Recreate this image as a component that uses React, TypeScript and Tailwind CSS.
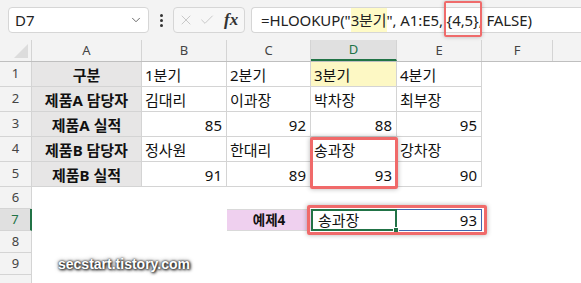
import { ChevronDown, X, Check } from 'lucide-react';

const KR = "font-['Segoe_UI','Noto_Sans','Noto_Sans_CJK_KR',sans-serif]";

const colW = ['w-[110px]', 'w-[85px]', 'w-[84px]', 'w-[86px]', 'w-[85px]', 'w-[71px]', 'w-[60px]'];
const colNames = ['A', 'B', 'C', 'D', 'E', 'F', ''];

type Cell = string | number;

const data: Cell[][] = [
  ['구분', '1분기', '2분기', '3분기', '4분기'],
  ['제품A 담당자', '김대리', '이과장', '박차장', '최부장'],
  ['제품A 실적', 85, 92, 88, 95],
  ['제품B 담당자', '정사원', '한대리', '송과장', '강차장'],
  ['제품B 실적', 91, 89, 93, 90],
];

function TopBar() {
  return (
    <div className="h-[40px] bg-[#f3f3f3] flex items-start pt-[7px] pl-[8px] gap-[6px]">
      <div className="w-[141px] h-[26px] bg-white border border-[#d6d6d6] rounded-[4px] flex items-center justify-between pl-[6px] pr-[5px]">
        <span className="text-[15px] text-[#222]">D7</span>
        <ChevronDown className="w-[14px] h-[14px] text-[#555]" strokeWidth={1.5} />
      </div>
      <div className="w-[12px] h-[26px] flex flex-col items-center justify-center gap-[2px]">
        <span className="w-[3px] h-[3px] bg-[#333] rounded-full" />
        <span className="w-[3px] h-[3px] bg-[#333] rounded-full" />
        <span className="w-[3px] h-[3px] bg-[#333] rounded-full" />
      </div>
      <div className="w-[72px] h-[26px] bg-[#f7f7f7] border border-[#d6d6d6] rounded-[4px] flex items-center pl-[4px] gap-[5px]">
        <X className="w-[16px] h-[16px] text-[#bdbdbd]" strokeWidth={1.2} />
        <Check className="w-[16px] h-[16px] text-[#bdbdbd]" strokeWidth={1.2} />
        <span className="ml-[4px] font-['Liberation_Serif',serif] italic text-[17px] text-[#333] font-semibold">fx</span>
      </div>
      <div className="flex-1 h-[26px] bg-white border border-r-0 border-[#d6d6d6] rounded-l-[4px] flex items-stretch pl-[9px] text-[15px] text-[#222] tracking-[-0.1px] whitespace-pre">
        <span className="self-center">=HLOOKUP(&quot;</span>
        <span className="bg-[#fffbc6] flex items-center">3분기</span>
        <span className="self-center">&quot;, A1:E5, </span>
        <span className="self-center relative">
          {'{4,5}'}
          <span className="absolute left-[-3px] right-[-3px] top-[-8px] bottom-[-6px] border-2 border-[#ef6b6b] rounded-[2px] shadow-[0_0_4px_rgba(0,0,0,0.25)]" />
        </span>
        <span className="self-center">, FALSE)</span>
      </div>
    </div>
  );
}

function HeaderRow() {
  return (
    <div className="flex h-[22px] bg-[#f3f3f3] border-b border-[#bfbfbf]">
      <div className="w-[32px] shrink-0 border-r border-[#d4d4d4] relative">
        <div className="absolute right-[3px] bottom-[3px] w-0 h-0 border-l-[14px] border-l-transparent border-b-[14px] border-b-[#dcdcdc]" />
      </div>
      {colNames.map((n, i) => (
        <div
          key={i}
          className={`${colW[i]} shrink-0 border-r border-[#d4d4d4] flex items-center justify-center text-[13px] text-[#444] ${
            n === 'D' ? 'bg-[#e0e0e0] border-b-2 border-b-[#217346] text-[#217346]' : ''
          }`}
        >
          {n}
        </div>
      ))}
    </div>
  );
}

function RowHead({ n, active }: { n?: number; active?: boolean }) {
  return (
    <div
      className={`w-[32px] shrink-0 flex items-center justify-center text-[13px] text-[#444] border-r border-b border-[#d4d4d4] ${
        active ? 'bg-[#e0e0e0] border-r-2 border-r-[#217346] text-[#217346]' : 'bg-[#f3f3f3]'
      }`}
    >
      {n}
    </div>
  );
}

function DataRow({ r, cells }: { r: number; cells: Cell[] }) {
  return (
    <div className="flex h-[25px]">
      <RowHead n={r} />
      {colNames.map((_, i) => {
        const v = cells[i];
        const isNum = typeof v === 'number';
        let cls = `${colW[i]} shrink-0 flex items-center pt-[2px] text-[15px] text-[#111] `;
        if (i < 5) cls += 'border-r border-b border-[#d4d4d4] ';
        if (i === 0) cls += 'bg-[#e7e6e6] justify-center font-bold text-[13.5px]';
        else if (isNum) cls += 'justify-end pr-[4px]';
        else cls += 'pl-[3px]';
        if (r === 1 && i === 3) cls += ' bg-[#fdf8c4]';
        return (
          <div key={i} className={cls}>
            {v ?? ''}
          </div>
        );
      })}
    </div>
  );
}

function EmptyRow({ r, children }: { r?: number; children?: React.ReactNode }) {
  return (
    <div className="flex h-[22px]">
      <RowHead n={r} active={r === 7} />
      {children}
    </div>
  );
}

export default function App() {
  return (
    <div className={`w-[581px] h-[283px] overflow-hidden bg-white relative ${KR}`}>
      <TopBar />
      <HeaderRow />
      {data.map((cells, i) => (
        <DataRow key={i} r={i + 1} cells={cells} />
      ))}
      <EmptyRow r={6} />
      <EmptyRow r={7}>
        <div className="w-[195px] shrink-0" />
        <div className="w-[84px] shrink-0 bg-[#efd0ef] flex items-center justify-center font-bold text-[13.5px] text-[#111] border-y border-[#d9d9d9]">
          예제4
        </div>
        <div className="w-[86px] shrink-0 relative flex items-center pl-[5px] text-[15px] text-[#111] border-2 border-[#217346]">
          송과장
          <span className="absolute right-[-4px] bottom-[-4px] w-[6px] h-[6px] bg-[#217346] border border-white" />
        </div>
        <div className="w-[85px] shrink-0 flex items-center justify-end pr-[4px] text-[15px] text-[#111] border border-l-0 border-[#3f66b0]">
          93
        </div>
      </EmptyRow>
      <EmptyRow r={8} />
      <EmptyRow r={9} />
      <EmptyRow />

      {/* callout boxes */}
      <div className="absolute left-[310px] top-[137px] w-[88px] h-[52px] border-[3px] border-[#f06a6a] rounded-[2px] shadow-[0_0_5px_rgba(0,0,0,0.3)]" />
      <div className="absolute left-[307px] top-[205px] w-[180px] h-[30px] border-[3px] border-[#f06a6a] rounded-[2px] shadow-[0_0_5px_rgba(0,0,0,0.3)]" />

      <div className="absolute left-[58px] top-[254px] font-['Liberation_Sans',sans-serif] font-bold text-[14px] text-white [text-shadow:0_0_2px_#222,1px_1px_3px_#000,0_0_4px_#555]">
        secstart.tistory.com
      </div>
    </div>
  );
}
